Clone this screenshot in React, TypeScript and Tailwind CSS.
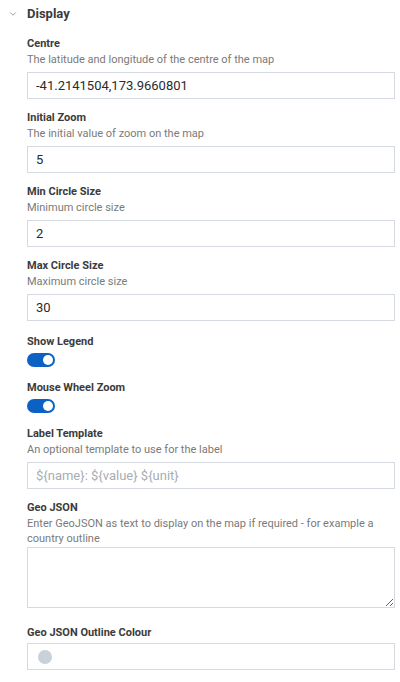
import { ChevronDown } from "lucide-react";

const font = { fontFamily: "Roboto, 'Liberation Sans', sans-serif" };

const Label = ({ children }: { children: React.ReactNode }) => (
  <p className="text-[11px] font-bold leading-[16px] text-[#3b3b3b]">{children}</p>
);

const Desc = ({ children }: { children: React.ReactNode }) => (
  <p className="text-[11px] leading-[15px] text-[#7a7a7a]">{children}</p>
);

const TextField = ({
  label,
  desc,
  value,
  placeholder,
}: {
  label: string;
  desc?: string;
  value?: string;
  placeholder?: string;
}) => (
  <div className="flex flex-col">
    <Label>{label}</Label>
    {desc && <Desc>{desc}</Desc>}
    <input
      className="mt-[5px] h-[27px] w-full border border-[#d5dae0] bg-white px-[8px] text-[13px] text-[#2b2b2b] placeholder:text-[#a9adb3] outline-none"
      defaultValue={value}
      placeholder={placeholder}
    />
  </div>
);

const Toggle = ({ label }: { label: string }) => (
  <div className="flex flex-col pb-[2px]">
    <Label>{label}</Label>
    <div className="mt-[3px] flex h-[14px] w-[28px] items-center justify-end rounded-full bg-[#0b62c4] px-[2px]">
      <div className="h-[10px] w-[10px] rounded-full bg-white" />
    </div>
  </div>
);

export default function App() {
  return (
    <div className="min-h-screen w-[400px] bg-white" style={font}>
      <div className="flex items-center gap-[9px] pl-[8px] pt-[6px]">
        <ChevronDown size={10} strokeWidth={2} className="text-[#8a8a8a]" />
        <span className="text-[13px] font-bold leading-[16px] text-[#3b3b3b]">Display</span>
      </div>

      <div className="flex flex-col gap-[11px] pl-[27px] pr-[5px] pt-[14px]">
        <TextField
          label="Centre"
          desc="The latitude and longitude of the centre of the map"
          value="-41.2141504,173.9660801"
        />
        <TextField label="Initial Zoom" desc="The initial value of zoom on the map" value="5" />
        <TextField label="Min Circle Size" desc="Minimum circle size" value="2" />
        <TextField label="Max Circle Size" desc="Maximum circle size" value="30" />
        <div className="mt-[2px]">
          <Toggle label="Show Legend" />
        </div>
        <Toggle label="Mouse Wheel Zoom" />
        <TextField
          label="Label Template"
          desc="An optional template to use for the label"
          placeholder="${name}: ${value} ${unit}"
        />
        <div className="flex flex-col">
          <Label>Geo JSON</Label>
          <Desc>Enter GeoJSON as text to display on the map if required - for example a country outline</Desc>
          <textarea className="mt-[1px] block h-[61px] w-full border border-[#d5dae0] bg-white px-[8px] text-[13px] outline-none" />
        </div>
        <div className="mt-[6px] flex flex-col">
          <Label>Geo JSON Outline Colour</Label>
          <div className="mt-[2px] flex h-[27px] w-full items-center border border-[#d5dae0] bg-white pl-[10px]">
            <div className="h-[14px] w-[14px] rounded-full bg-[#c8d0d9]" />
          </div>
        </div>
      </div>
    </div>
  );
}
